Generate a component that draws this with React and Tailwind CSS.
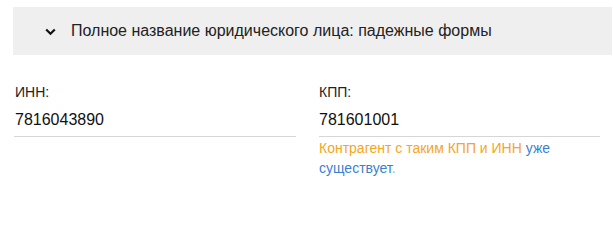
export default function App() {
  return (
    <div className="w-[613px] h-[205px] bg-white" style={{ fontFamily: '"Liberation Sans", Arial, sans-serif' }}>
      <div className="pt-[7px] pl-[13px] pr-px">
        <div className="h-[48px] bg-[#efefef] flex items-center pl-[32px]">
          <svg width="11" height="8" viewBox="0 0 11 8" className="mr-[15px] mt-[1px]">
            <path d="M1.2 1.5 L5.5 5.8 L9.8 1.5" fill="none" stroke="#111" strokeWidth="2.2" />
          </svg>
          <span className="text-[16px] text-[#222]">Полное название юридического лица: падежные формы</span>
        </div>
      </div>
      <div className="flex gap-[23px] pl-[14px] pt-[27px]">
        <div className="w-[282px]">
          <div className="text-[14px] leading-[20px] text-[#222] pl-px">ИНН:</div>
          <div className="text-[16px] leading-[20px] text-[#111] pl-px pt-[8px] pb-[6px] border-b border-[#d6d6d6]">7816043890</div>
        </div>
        <div className="w-[281px]">
          <div className="text-[14px] leading-[20px] text-[#222]">КПП:</div>
          <div className="text-[16px] leading-[20px] text-[#111] pt-[8px] pb-[6px] border-b border-[#d6d6d6]">781601001</div>
          <div className="text-[14px] leading-[20px] pt-[1px]">
            <span className="text-[#f5a623]">Контрагент с таким КПП и ИНН </span>
            <span className="text-[#3b7fd0]">уже существует</span>
            <span className="text-[#8fb4d9]">.</span>
          </div>
        </div>
      </div>
    </div>
  );
}
